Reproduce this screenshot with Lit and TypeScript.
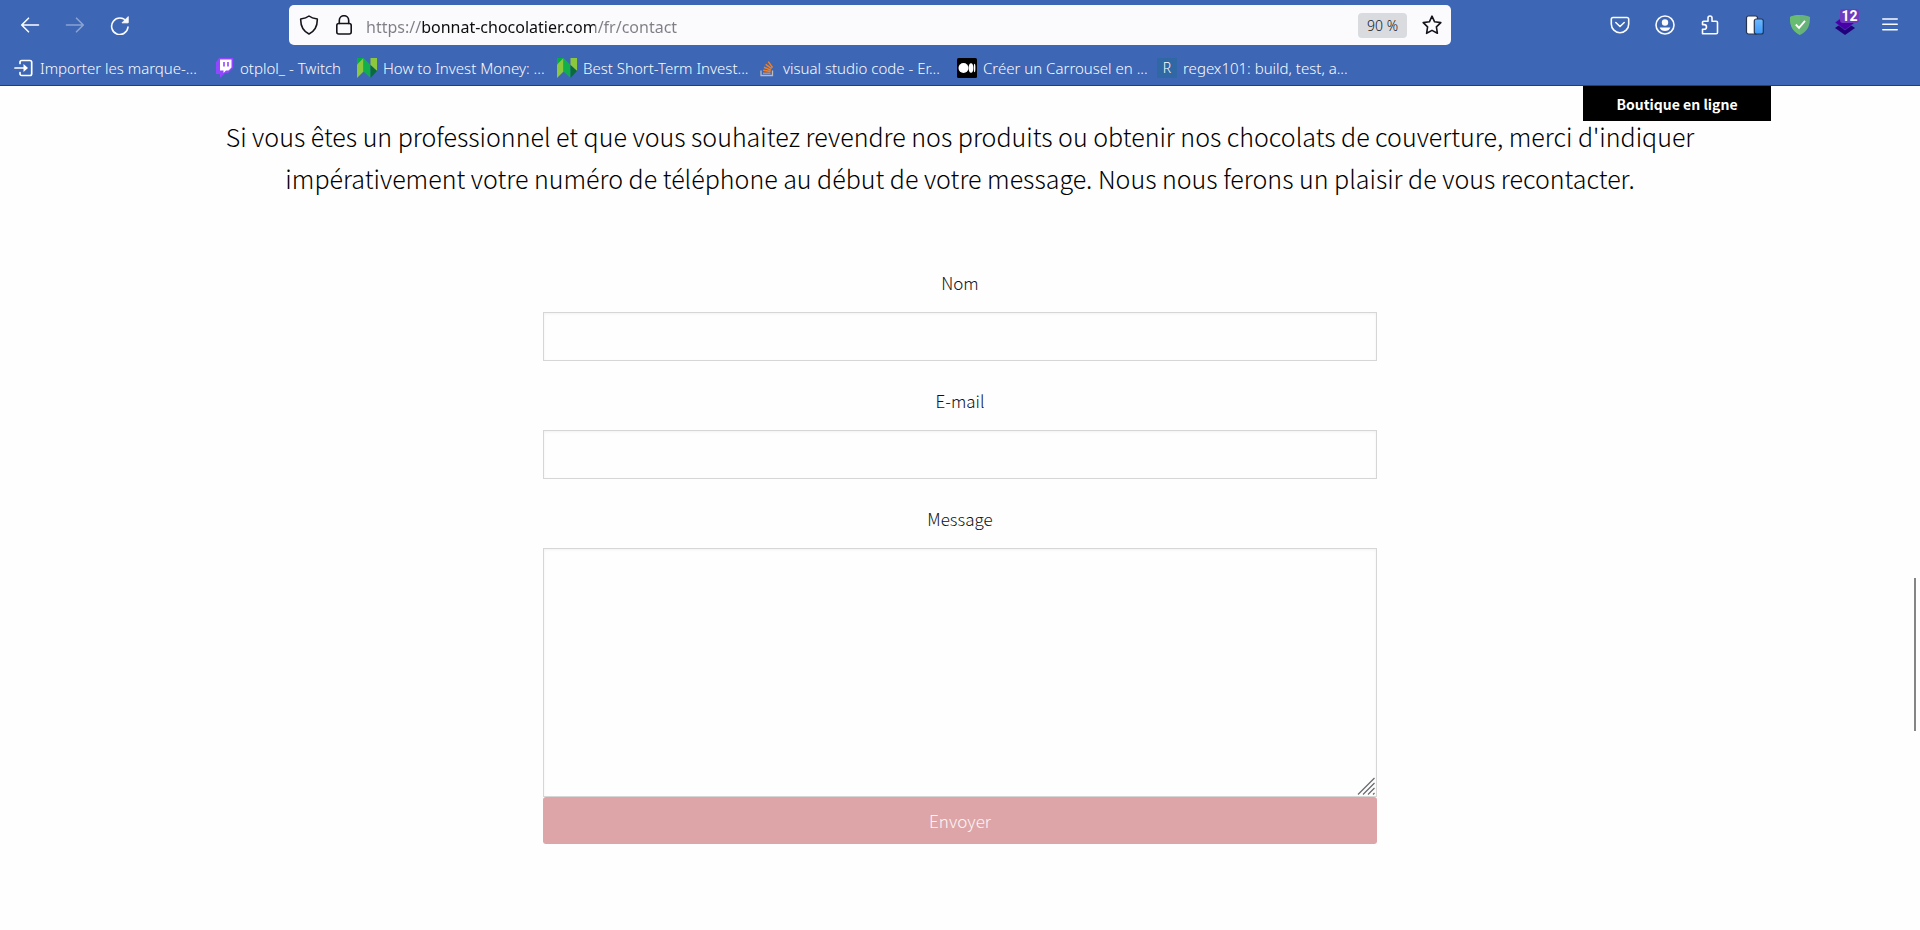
import { LitElement, html, css, svg, TemplateResult } from "lit";
import { customElement, property } from "lit/decorators.js";

const importIcon = html`<svg class="fav" viewBox="0 0 20 20" aria-hidden="true">
  <path d="M6 5.500V4.200A1.700 1.700 0 0 1 7.700 2.500H16A1.700 1.700 0 0 1 17.700 4.200V15.800A1.700 1.700 0 0 1 16 17.500H7.700A1.700 1.700 0 0 1 6 15.800V14.500" fill="none" stroke="#fff" stroke-width="1.700" stroke-linecap="round"/>
  <path d="M1 10H12" stroke="#fff" stroke-width="1.700" stroke-linecap="round"/><path d="M9.500 6L14 10L9.500 14Z" fill="#fff"/></svg>`;
const twitchIcon = html`<svg class="fav" viewBox="0 0 20 20" aria-hidden="true">
  <path d="M5 0H19V10L14 15H11L6 20V16H2V4Z" fill="#9146ff"/><path d="M6 1.500H17.500V9.500L14.500 12.500H12L9.500 15V12.500H6Z" fill="#fff"/>
  <path d="M10 4V8.500M14 4V8.500" stroke="#9146ff" stroke-width="1.600"/></svg>`;
const nerdIcon = html`<svg class="fav" viewBox="0 0 20 20" aria-hidden="true">
  <path d="M0 0H6.500L0 6.500Z" fill="#00b140"/><path d="M6.500 0V13.500L0 20V6.500Z" fill="#8cc83c"/>
  <path d="M6.500 0L13.500 7V20L6.500 13.500Z" fill="#12b04a"/><path d="M13.500 0H20V13L13.500 7Z" fill="#8cc83c"/>
  <path d="M13.500 7L20 13L13.500 20Z" fill="#0a6b3a"/></svg>`;
const stackIcon = html`<svg class="fav" viewBox="0 0 20 20" aria-hidden="true">
  <path d="M4 12.500V17.500H15.500V12.500" fill="none" stroke="#bcbbbb" stroke-width="1.300"/>
  <path d="M6 15.200H13.500M6.200 12.200L13.600 13.600M7 9.200L13.900 12.100M8.700 6.300L14.600 10.700M11.300 3.600L15.600 9.600" stroke="#f48024" stroke-width="1.500"/></svg>`;
const mediumIcon = html`<svg class="fav" viewBox="0 0 20 20" aria-hidden="true">
  <rect width="20" height="20" rx="1.500"/><circle cx="6.500" cy="10" r="5" fill="#fff"/>
  <ellipse cx="14" cy="10" rx="2.300" ry="4.700" fill="#fff"/><ellipse cx="17.600" cy="10" rx="0.800" ry="4.200" fill="#fff"/></svg>`;
const regexIcon = html`<span class="fav letter" aria-hidden="true">R</span>`;

interface Bookmark { label: string; icon: TemplateResult; short?: boolean }

const bookmarks: Bookmark[] = [
  { label: "Importer les marque-...", icon: importIcon },
  { label: "otplol_ - Twitch", icon: twitchIcon, short: true },
  { label: "How to Invest Money: ...", icon: nerdIcon },
  { label: "Best Short-Term Invest...", icon: nerdIcon },
  { label: "visual studio code - Er...", icon: stackIcon },
  { label: "Créer un Carrousel en ...", icon: mediumIcon },
  { label: "regex101: build, test, a...", icon: regexIcon },
];

const line = (shapes: unknown, size = 20) => html`<svg width=${size} height=${size} viewBox="0 0 20 20" fill="none"
  stroke="currentColor" stroke-width="1.600" stroke-linecap="round" stroke-linejoin="round" aria-hidden="true">${shapes}</svg>`;

@customElement("browser-bar")
class BrowserBar extends LitElement {
  static styles = css`
    :host { display: block; background: #3d66b5; border-bottom: 1px solid #1c3f80; color: #fbfbfe; font-family: "Noto Sans", "Open Sans", sans-serif; }
    button { border: 0; padding: 0; background: none; color: inherit; font: inherit; display: grid; place-items: center; }
    svg { display: block; }
    .nav { display: flex; align-items: center; padding: 5px 8px 0 7px; }
    .tool { width: 45px; height: 40px; position: relative; flex: none; }
    .tool:disabled { color: #8ba3d3; }
    .address { flex: 1; min-width: 0; height: 40px; margin: 0 146px 0 147px; background: #fbfbfe; border-radius: 5px; color: #15141a; display: flex; align-items: center; padding: 0 2px; box-sizing: border-box; }
    .slot { width: 35px; height: 36px; flex: none; }
    .url { flex: 1; min-width: 0; border: 0; padding: 3px 0 0; margin-left: 5px; outline: 0; font: 16px/24px "Noto Sans", "Open Sans", sans-serif; color: #15141a;
      background: linear-gradient(90deg, #7e7e84 55px, #0c0c0d 55px, #0c0c0d 229px, #7e7e84 229px); -webkit-background-clip: text; background-clip: text; -webkit-text-fill-color: transparent; }
    .zoom { width: 49px; height: 25px; border-radius: 4px; background: #dadbdf; font-size: 14px; margin-right: 7px; flex: none; }
    .badge { position: absolute; left: 18px; top: 4px; width: 19px; height: 14px; border-radius: 3px; background: #7139bd; font: bold 14px/14px Roboto, sans-serif; color: #fff; text-align: center; }
    .marks { display: flex; align-items: center; height: 40px; padding: 6px 0 0 14px; box-sizing: border-box; }
    .mark { flex: 0 0 200px; display: flex; align-items: center; gap: 6px; color: inherit; text-decoration: none; font-size: 15px; line-height: 24px; white-space: nowrap; }
    .short { flex-basis: 143px; }
    .fav { width: 20px; height: 20px; flex: none; }
    .letter { background: #3067a5; font-size: 14px; line-height: 20px; text-align: center; }
  `;

  render() {
    return html`
      <div class="nav">
        <button class="tool" aria-label="Précédent">${line(svg`<path d="M18.500 10H2M8.500 3.200L1.700 10L8.500 16.800"/>`)}</button>
        <button class="tool" aria-label="Suivant" disabled>${line(svg`<path d="M1.500 10H18M11.500 3.200L18.300 10L11.500 16.800"/>`)}</button>
        <button class="tool" aria-label="Actualiser">${line(svg`<path d="M16.500 6.500A8.200 8.200 0 1 0 18 12"/><path d="M18.200 2V7.800H12.400Z" fill="currentColor" stroke-width="1"/>`)}</button>
        <div class="address">
          <button class="slot" aria-label="Protection">${line(svg`<path d="M10 1C12.500 3 15 3.500 18.300 4C18.500 11 16 16 10 19C4 16 1.500 11 1.700 4C5 3.500 7.500 3 10 1Z"/>`)}</button>
          <button class="slot" aria-label="Connexion sécurisée">${line(svg`<rect x="2.800" y="8.500" width="14.400" height="10.500" rx="2"/><path d="M5.300 8.500V5.400A4.700 4.700 0 0 1 14.700 5.400V8.500"/>`)}</button>
          <input class="url" type="text" aria-label="Adresse" .value=${"https://bonnat-chocolatier.com/fr/contact"}>
          <button class="zoom">90 %</button>
          <button class="slot" aria-label="Ajouter aux favoris">${line(svg`<path d="M10 1.200L12.600 6.800L18.800 7.600L14.400 11.900L15.400 18.300L10 15.400L4.600 18.300L5.600 11.900L1.200 7.600L7.400 6.800Z"/>`)}</button>
        </div>
        <button class="tool" aria-label="Pocket">${line(svg`<path d="M3 2.500H17A1.700 1.700 0 0 1 18.700 4.200V9A8.700 8.700 0 0 1 1.300 9V4.200A1.700 1.700 0 0 1 3 2.500Z"/><path d="M5.800 7.500L10 11.500L14.200 7.500"/>`)}</button>
        <button class="tool" aria-label="Compte">${line(svg`<circle cx="10" cy="10" r="9"/><circle cx="10" cy="7.500" r="3.200" fill="currentColor" stroke="none"/><path d="M4.600 12.500H15.400C14.500 15 12.500 16 10 16S5.500 15 4.600 12.500Z" fill="currentColor" stroke="none"/>`)}</button>
        <button class="tool" aria-label="Extensions">${line(svg`<path d="M2.500 18.700V14.200H4.200A2.300 2.300 0 0 0 4.200 9.600H2.500V7.500A1.300 1.300 0 0 1 3.800 6.200H8V3A2 2 0 0 1 12 3V6.200H16.200A1.300 1.300 0 0 1 17.500 7.500V17.400A1.300 1.300 0 0 1 16.200 18.700Z"/>`)}</button>
        <button class="tool" aria-label="Simulateur mobile">
          <svg width="20" height="20" viewBox="0 0 20 20" aria-hidden="true"><defs><linearGradient id="scr" x2="0" y2="1"><stop stop-color="#6db9ff"/><stop offset="1" stop-color="#3a98fb"/></linearGradient></defs>
            <rect x="1.500" y="1" width="11" height="18" rx="2" fill="#fff" stroke="#26344f" stroke-width="1.200"/><rect x="9.300" y="4" width="9" height="15" rx="2" fill="url(#scr)" stroke="#26344f" stroke-width="1.200"/></svg>
        </button>
        <button class="tool" aria-label="Bloqueur de publicité">
          <svg width="20" height="20" viewBox="0 0 20 20" aria-hidden="true"><path d="M10 0C6.500 0 3 0.500 0 2C0 9 1 15.500 10 20C19 15.500 20 9 20 2C17 0.500 13.500 0 10 0Z" fill="#67b279"/><path d="M10 0C6.500 0 3 0.500 0 2C0 9 1 15.500 10 20Z" fill="#68bc71"/><path d="M5.800 9.500L9 12.800L15 5.800" fill="none" stroke="#fff" stroke-width="1.800"/></svg>
        </button>
        <button class="tool" aria-label="Calques">
          <svg width="20" height="20" viewBox="0 0 20 20" aria-hidden="true"><path d="M0 13L10 6L20 13L10 20Z" fill="#22007c"/><path d="M0 7.500L10 0L20 7.500L10 15Z" fill="#4a00a8" stroke="#3d66b5" stroke-width="0.500"/></svg>
          <span class="badge">12</span>
        </button>
        <button class="tool" aria-label="Menu">${line(svg`<path d="M2.800 4H17.200M2.800 9.300H17.200M2.800 14.700H17.200"/>`)}</button>
      </div>
      <nav class="marks" aria-label="Marque-pages">
        ${bookmarks.map((b) => html`<a class="mark ${b.short ? "short" : ""}" href="#">${b.icon}<span>${b.label}</span></a>`)}
      </nav>`;
  }
}

@customElement("form-field")
class FormField extends LitElement {
  @property() label = "";
  @property() kind = "text";

  static styles = css`
    :host { display: block; }
    .label { display: block; text-align: center; font-size: 17px; line-height: 24px; margin-bottom: 17px; color: #111; }
    .box { display: block; width: 100%; box-sizing: border-box; border: 1px solid #d6d6d6; border-radius: 0; background: #fefefe; box-shadow: inset 0 1px 3px #0000000d; padding: 8px 12px; font: inherit; outline: 0; height: 49px; }
    .area { height: 249px; resize: none; }
    .wrap { position: relative; }
    .grip { position: absolute; right: 2px; bottom: 2px; }
  `;

  render() {
    return html`<label class="label" for="control">${this.label}</label>
      ${this.kind === "area"
        ? html`<div class="wrap"><textarea class="box area" id="control"></textarea>
            <svg class="grip" width="18" height="18" viewBox="0 0 18 18" stroke="#6c6c72" stroke-width="1.300" aria-hidden="true"><path d="M1 17.500L17.500 1M6 17.500L17.500 6M11 17.500L17.500 11M16 17.500L17.500 16"/></svg></div>`
        : html`<input class="box" id="control" type=${this.kind}>`}`;
  }
}

@customElement("app-root")
class AppRoot extends LitElement {
  static styles = css`
    :host { display: block; position: relative; min-height: 100vh; background: #fefefe; color: #000; font-family: "Noto Sans CJK JP", "Noto Sans CJK SC", sans-serif; font-weight: 300; }
    .page { position: relative; padding: 29px 24px 48px; }
    .shop { position: absolute; top: 0; right: 149px; width: 188px; height: 35px; background: #000; color: #fff; font-weight: 700; font-size: 14px; line-height: 36px; text-align: center; text-decoration: none; }
    .intro { max-width: 1510px; margin: 0 auto 72px; text-align: center; font-size: 25px; line-height: 42px; }
    .form { max-width: 834px; margin: 0 auto; display: flex; flex-direction: column; }
    .field { margin-bottom: 28px; }
    .last { margin-bottom: 0; }
    .send { height: 47px; border: 0; border-radius: 3px; background: #dda5a8; color: #fdf6f6; font: inherit; font-size: 17px; }
    .scroll { position: absolute; right: 4px; top: 578px; width: 2px; height: 153px; background: #858585; }
  `;

  render() {
    return html`
      <browser-bar></browser-bar>
      <main class="page">
        <a class="shop" href="#">Boutique en ligne</a>
        <p class="intro">Si vous êtes un professionnel et que vous souhaitez revendre nos produits ou obtenir nos chocolats de couverture, merci d'indiquer impérativement votre numéro de téléphone au début de votre message. Nous nous ferons un plaisir de vous recontacter.</p>
        <form class="form" @submit=${(e: Event) => e.preventDefault()}>
          <form-field class="field" label="Nom"></form-field>
          <form-field class="field" label="E-mail" kind="email"></form-field>
          <form-field class="field last" label="Message" kind="area"></form-field>
          <button class="send" type="submit">Envoyer</button>
        </form>
      </main>
      <div class="scroll" aria-hidden="true"></div>`;
  }
}
